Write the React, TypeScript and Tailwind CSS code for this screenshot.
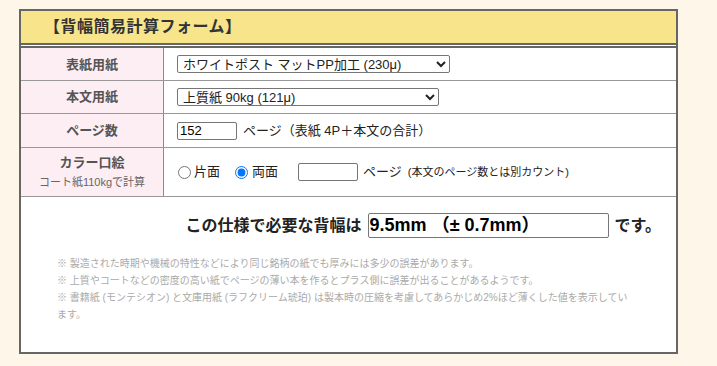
import React from "react";

const font = "font-['Liberation_Sans','Noto_Sans_CJK_JP',sans-serif]";

const Label = ({ children, sub }: { children: React.ReactNode; sub?: string }) => (
  <div className="bg-[#fdeef3] border-r border-[#8a8a8a] flex flex-col items-center justify-center">
    <span className="text-[13px] font-bold text-[#555] leading-[16px]">{children}</span>
    {sub && <span className="text-[11px] text-[#666] leading-[14px] mt-[4px]">{sub}</span>}
  </div>
);

const App = () => {
  return (
    <div className={`${font} bg-[#fdf6e9] w-[717px] h-[366px] pt-[9px] pl-[19px]`}>
      <div className="w-[659px] border-2 border-[#666] bg-white">
        <div className="h-[34px] bg-[#f7e48b] border-b-2 border-[#666] flex items-center pl-[23px]">
          <h1 className="text-[16px] font-bold text-[#333] tracking-[0.5px]">【背幅簡易計算フォーム】</h1>
        </div>
        <div className="mt-[1px] border-t-2 border-[#666] grid grid-cols-[143px_1fr] text-[#222]">
          <Label>表紙用紙</Label>
          <div className="h-[33px] flex items-center pl-[13px] border-b border-[#999]">
            <select defaultValue="a" className="w-[273px] h-[18px] text-[13px] border border-[#767676] rounded-[2px] px-[1px] bg-white">
              <option value="a">ホワイトポスト マットPP加工 (230μ)</option>
            </select>
          </div>
          <div className="col-span-2 h-px bg-[#999] -mt-px" />
          <Label>本文用紙</Label>
          <div className="h-[32px] flex items-center pl-[13px]">
            <select defaultValue="a" className="w-[262px] h-[18px] text-[13px] border border-[#767676] rounded-[2px] px-[1px] bg-white">
              <option value="a">上質紙 90kg (121μ)</option>
            </select>
          </div>
          <div className="col-span-2 h-px bg-[#999]" />
          <Label>ページ数</Label>
          <div className="h-[33px] flex items-center pl-[13px] text-[13px]">
            <input defaultValue="152" className="w-[60px] h-[18px] border border-[#767676] rounded-[2px] px-[2px] text-[13px] text-black" />
            <span className="ml-[6px]">ページ（表紙 4P＋本文の合計）</span>
          </div>
          <div className="col-span-2 h-px bg-[#999]" />
          <Label sub="コート紙110kgで計算">カラー口絵</Label>
          <div className="h-[48px] flex items-center pl-[14px] text-[13px]">
            <label className="flex items-center">
              <input type="radio" name="c" className="w-[13px] h-[13px] m-0" />
              <span className="ml-[3px]">片面</span>
            </label>
            <label className="flex items-center ml-[15px]">
              <input type="radio" name="c" defaultChecked className="w-[13px] h-[13px] m-0 accent-[#0075ff]" />
              <span className="ml-[4px]">両面</span>
            </label>
            <input className="ml-[20px] w-[60px] h-[18px] border border-[#767676] rounded-[2px]" />
            <span className="ml-[5px]">ページ</span>
            <span className="ml-[6px] text-[11px]">(本文のページ数とは別カウント)</span>
          </div>
          <div className="col-span-2 h-px bg-[#999]" />
        </div>
        <div className="h-[155px]">
          <div className="flex items-center justify-end pr-[15px] pt-[16px]">
            <span className="text-[16px] font-bold text-[#222]">この仕様で必要な背幅は</span>
            <input
              readOnly
              value="9.5mm （± 0.7mm）"
              className="ml-[6px] w-[241px] h-[25px] border border-[#767676] rounded-[2px] px-[1px] text-[18px] font-bold text-black"
            />
            <span className="ml-[6px] text-[16px] font-bold text-[#222]">です。</span>
          </div>
          <div className="mt-[17px] pl-[36px] pr-[44px] text-[10px] leading-[17px] text-[#aaa]">
            <p>※ 製造された時期や機械の特性などにより同じ銘柄の紙でも厚みには多少の誤差があります。</p>
            <p>※ 上質やコートなどの密度の高い紙でページの薄い本を作るとプラス側に誤差が出ることがあるようです。</p>
            <p>※ 書籍紙 (モンテシオン) と文庫用紙 (ラフクリーム琥珀) は製本時の圧縮を考慮してあらかじめ2%ほど薄くした値を表示しています。</p>
          </div>
        </div>
      </div>
    </div>
  );
};

export default App;
